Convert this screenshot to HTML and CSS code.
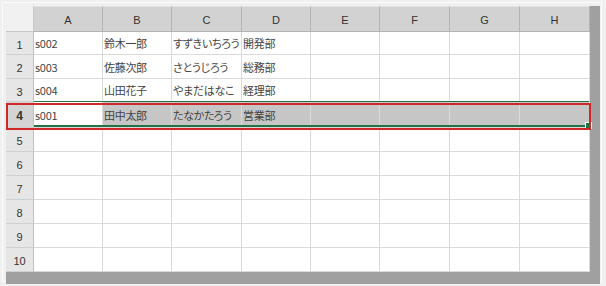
FILE: index.html
```html
<!DOCTYPE html>
<html>
<head>
	<title>Sheet</title>
	<link rel="stylesheet" href="styles.css">
</head>
<body>
	<div class="window">
		<div class="frame">
			<div class="grid">
				<!-- header row -->
				<div class="corner"></div>
				<div class="col-head">A</div>
				<div class="col-head">B</div>
				<div class="col-head">C</div>
				<div class="col-head">D</div>
				<div class="col-head">E</div>
				<div class="col-head">F</div>
				<div class="col-head">G</div>
				<div class="col-head">H</div>

				<div class="row-head">1</div>
				<div class="cell">s002</div><div class="cell">鈴木一郎</div><div class="cell">すずきいちろう</div><div class="cell">開発部</div>
				<div class="cell"></div><div class="cell"></div><div class="cell"></div><div class="cell"></div>

				<div class="row-head">2</div>
				<div class="cell">s003</div><div class="cell">佐藤次郎</div><div class="cell">さとうじろう</div><div class="cell">総務部</div>
				<div class="cell"></div><div class="cell"></div><div class="cell"></div><div class="cell"></div>

				<div class="row-head">3</div>
				<div class="cell">s004</div><div class="cell">山田花子</div><div class="cell">やまだはなこ</div><div class="cell">経理部</div>
				<div class="cell"></div><div class="cell"></div><div class="cell"></div><div class="cell"></div>

				<div class="row-head active">4</div>
				<div class="cell">s001</div><div class="cell sel">田中太郎</div><div class="cell sel">たなかたろう</div><div class="cell sel">営業部</div>
				<div class="cell sel"></div><div class="cell sel"></div><div class="cell sel"></div><div class="cell sel"></div>

				<div class="row-head">5</div>
				<div class="cell"></div><div class="cell"></div><div class="cell"></div><div class="cell"></div>
				<div class="cell"></div><div class="cell"></div><div class="cell"></div><div class="cell"></div>

				<div class="row-head">6</div>
				<div class="cell"></div><div class="cell"></div><div class="cell"></div><div class="cell"></div>
				<div class="cell"></div><div class="cell"></div><div class="cell"></div><div class="cell"></div>

				<div class="row-head">7</div>
				<div class="cell"></div><div class="cell"></div><div class="cell"></div><div class="cell"></div>
				<div class="cell"></div><div class="cell"></div><div class="cell"></div><div class="cell"></div>

				<div class="row-head">8</div>
				<div class="cell"></div><div class="cell"></div><div class="cell"></div><div class="cell"></div>
				<div class="cell"></div><div class="cell"></div><div class="cell"></div><div class="cell"></div>

				<div class="row-head">9</div>
				<div class="cell"></div><div class="cell"></div><div class="cell"></div><div class="cell"></div>
				<div class="cell"></div><div class="cell"></div><div class="cell"></div><div class="cell"></div>

				<div class="row-head">10</div>
				<div class="cell"></div><div class="cell"></div><div class="cell"></div><div class="cell"></div>
				<div class="cell"></div><div class="cell"></div><div class="cell"></div><div class="cell"></div>

				<!-- selection overlays -->
				<div class="selection"><span class="handle"></span></div>
				<div class="highlight"></div>
			</div>
		</div>
	</div>
</body>
</html>
```

FILE: styles.css
```css
body {
	margin: 0;
	background-color: #f0f0f0;
	font-family: "Noto Sans CJK JP", "Liberation Sans", sans-serif;
	color: #444;
}

.window {
	margin: 2px;
	width: 600px;
	height: 280px;
	border: 1px solid #fbfbfb;
	padding: 3px;
	box-sizing: border-box;
}

.frame {
	display: inline-block;
	background-color: #a0a0a0;
	padding: 0 10px 12px 0;
}

.grid {
	position: relative;
	display: grid;
	grid-template-columns: 28px 69px 69px 70px 69px 69px 70px 70px 70px;
	grid-template-rows: 26px 23px 24px 23px 26px 24px 24px 24px 24px 24px 24px;
	background-color: #fff;
}

.corner {
	background-color: #f1f1f1;
	border-right: 1px solid #c8c8c8;
	border-bottom: 1px solid #c8c8c8;
}

.col-head {
	display: flex;
	align-items: center;
	justify-content: center;
	background-color: #d2d2d2;
	border-top: 1px solid #e2e2e2;
	border-right: 1px solid #b4b4b4;
	border-bottom: 1px solid #b4b4b4;
	font-family: "Liberation Sans", sans-serif;
	font-size: 11px;
	color: #333;
	padding-top: 2px;
}

.row-head {
	display: flex;
	align-items: center;
	justify-content: center;
	background-color: #e6e6e6;
	border-right: 1px solid #c0c0c0;
	border-bottom: 1px solid #d0d0d0;
	font-family: "Liberation Sans", sans-serif;
	font-size: 11px;
	color: #333;
	padding-top: 3px;
}

.row-head.active {
	background-color: #d4d4d4;
	font-weight: bold;
	font-size: 12px;
}

.cell {
	display: flex;
	align-items: center;
	padding-left: 1px;
	border-right: 1px solid #dadada;
	border-bottom: 1px solid #dadada;
	font-size: 11px;
	font-feature-settings: "palt";
	white-space: nowrap;
	overflow: hidden;
	letter-spacing: -0.3px;
}

.cell.sel {
	background-color: #c6c6c6;
}

.selection {
	position: absolute;
	left: 28px;
	top: 95px;
	width: 555px;
	height: 23px;
	border-top: 1px solid #217346;
	border-bottom: 2px solid #217346;
	border-right: 1px solid #fff;
}

.handle {
	position: absolute;
	right: -3px;
	bottom: -4px;
	width: 5px;
	height: 5px;
	background-color: #217346;
	border: 1px solid #fff;
}

.highlight {
	position: absolute;
	left: 0;
	top: 97px;
	width: 585px;
	height: 27px;
	border: 2px solid #d02828;
	box-sizing: border-box;
}
```
